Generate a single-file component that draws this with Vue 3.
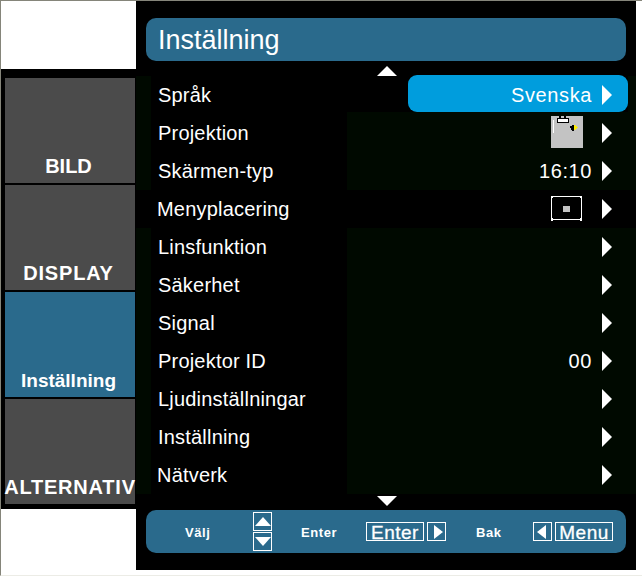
<script setup>
const tabs = [
  { label: 'BILD', cls: 'bild' },
  { label: 'DISPLAY', cls: 'display' },
  { label: 'Inställning', cls: 'active' },
  { label: 'ALTERNATIV', cls: 'alt' },
]
const rows = [
  { label: 'Språk', value: 'Svenska', selected: true, tint: true },
  { label: 'Projektion', icon: 'proj', tint: true },
  { label: 'Skärmen-typ', value: '16:10', tint: true },
  { label: 'Menyplacering', icon: 'menu', tint: false, tight: true },
  { label: 'Linsfunktion', tint: true },
  { label: 'Säkerhet', tint: true },
  { label: 'Signal', tint: true },
  { label: 'Projektor ID', value: '00', tint: true },
  { label: 'Ljudinställningar', tint: true },
  { label: 'Inställning', tint: true },
  { label: 'Nätverk', tint: true, tight: true },
]
</script>

<template>
  <div class="screen">
    <div class="osd">
      <aside class="side">
        <div class="blank top"></div>
        <nav class="tabs">
          <div v-for="t in tabs" :key="t.label" class="tab" :class="t.cls">{{ t.label }}</div>
        </nav>
        <div class="blank bottom"></div>
      </aside>
      <main class="main">
        <header class="title">Inställning</header>
        <div class="arrow-row"><span class="tri up"></span></div>
        <section class="list">
          <div v-for="r in rows" :key="r.label" class="row" :class="{ tinted: r.tint }">
            <div class="label" :class="{ tight: r.tight }">{{ r.label }}</div>
            <div class="cell" :class="{ sel: r.selected }">
              <span v-if="r.value" class="value">{{ r.value }}</span>
              <svg v-if="r.icon === 'proj'" class="ic proj" width="32" height="32" viewBox="0 0 32 32">
                <rect width="32" height="32" fill="#c3c3c3" />
                <rect x="2" y="4" width="1" height="13" fill="#fff" />
                <rect x="6.500" y="2.500" width="11" height="4" fill="#fff" stroke="#000" />
                <rect x="8" y="0" width="2" height="2" fill="#000" />
                <rect x="13" y="0" width="2" height="2" fill="#000" />
                <path d="M19 10h2v-1h2v6h-2v-1h-1v-2h-1z" fill="#000" />
                <path d="M23 9h1l3 2.500-3 2.500h-1z" fill="#ffef00" />
              </svg>
              <svg v-if="r.icon === 'menu'" class="ic place" width="32" height="25" viewBox="0 0 32 25">
                <rect x="0.500" y="0.500" width="30" height="23" fill="none" stroke="#fff" />
                <rect x="0" y="0" width="2" height="2" fill="#fff" /><rect x="29" y="0" width="2" height="2" fill="#fff" />
                <rect x="0" y="22" width="2" height="3" fill="#fff" /><rect x="29" y="22" width="2" height="3" fill="#fff" />
                <rect x="12" y="10" width="7" height="6" fill="#c3c3c3" />
              </svg>
              <span class="chev"></span>
            </div>
          </div>
        </section>
        <div class="arrow-row low"><span class="tri down"></span></div>
        <footer class="foot">
          <span class="hint valj">Välj</span>
          <span class="updown">
            <span class="kbox"><span class="ktri up"></span></span>
            <span class="kbox"><span class="ktri down"></span></span>
          </span>
          <span class="hint enter">Enter</span>
          <span class="key k-enter">Enter</span>
          <span class="kbox k-right"><span class="ktri right"></span></span>
          <span class="hint bak">Bak</span>
          <span class="kbox k-left"><span class="ktri left"></span></span>
          <span class="key k-menu">Menu</span>
        </footer>
      </main>
    </div>
  </div>
</template>

<style>
html, body { margin: 0; background: #fff; }
</style>

<style scoped>
.screen { width: 642px; height: 576px; overflow: hidden; background: #fff; font-family: "Liberation Sans", Arial, sans-serif; color: #fff; box-sizing: border-box; border-top: 1px solid #85857a; border-left: 1px solid #85857a; border-bottom: 1px solid #ecece6; }
.osd { display: flex; width: 635px; height: 569px; background: #000; }
.side { width: 135px; flex: none; display: flex; flex-direction: column; }
.blank { background: #fff; }
.blank.top { height: 68px; }
.blank.bottom { flex: 1; }
.tabs { height: 440px; box-sizing: border-box; padding: 9px 0 5px 4px; display: flex; flex-direction: column; gap: 2px; background: #000; }
.tab { width: 130px; height: 105px; background: #4b4b4b; display: flex; align-items: flex-end; justify-content: center; box-sizing: border-box; padding: 0 3px 5px 0; font-size: 20px; font-weight: 700; line-height: 23px; white-space: nowrap; }
.tab.display { letter-spacing: 0.8px; }
.tab.alt { letter-spacing: 0.8px; padding-right: 0; }
.tab.active { background: #2a6a8c; font-size: 19px; }
.main { flex: 1; min-width: 0; display: flex; flex-direction: column; background: #000; }
.title { margin: 17px 10px 0 10px; height: 43px; background: #2a6a8c; border-radius: 10px; font-size: 27px; line-height: 45px; padding-left: 12px; }
.arrow-row { height: 15px; display: flex; justify-content: center; align-items: flex-end; padding-left: 2px; }
.arrow-row.low { height: 14px; align-items: flex-start; }
.list { height: 420px; flex: none; }
.row { height: 38px; display: flex; }
.label { width: 211px; flex: none; box-sizing: border-box; border-left: 15px solid #000; padding-left: 7px; font-size: 20px; line-height: 38px; letter-spacing: 0.2px; white-space: nowrap; }
.label.tight { padding-left: 6px; }
.tinted .label { border-left-color: #000900; }
.cell { flex: 1; display: flex; justify-content: flex-end; align-items: center; padding-right: 24px; position: relative; }
.tinted .cell { background: #000900; }
.tinted .cell.sel { background: linear-gradient(#000900, #000900) right / 8px 100% no-repeat, linear-gradient(#000900, #000900) bottom / 100% 2px no-repeat, #000; }
.cell.sel::before { content: ""; position: absolute; left: 61px; right: 8px; top: -1px; height: 37px; background: #009ddd; border-radius: 9px; }
.value { position: relative; font-size: 20px; letter-spacing: 0.6px; margin-right: 10px; }
.ic { margin-right: 19px; display: block; }
.ic.proj { margin-bottom: 2px; }
.ic.place { margin-bottom: 1px; }
.chev { position: relative; width: 0; height: 0; border-left: 10px solid #fff; border-top: 10px solid transparent; border-bottom: 10px solid transparent; flex: none; }
.tri { width: 0; height: 0; border-left: 10px solid transparent; border-right: 10px solid transparent; }
.tri.up { border-bottom: 10px solid #fff; }
.tri.down { border-top: 10px solid #fff; }
.foot { margin: 0 10px; height: 43px; background: #2a6a8c; border-radius: 10px; display: flex; align-items: center; font-size: 13px; font-weight: 700; }
.hint { letter-spacing: 0.6px; margin-top: 2px; white-space: nowrap; flex: none; }
.valj { margin-left: 39px; width: 68px; }
.updown { display: flex; flex-direction: column; gap: 1px; flex: none; }
.kbox { width: 19px; height: 19px; box-sizing: border-box; border: 1px solid #fff; display: flex; align-items: center; justify-content: center; flex: none; }
.enter { margin-left: 29px; width: 36px; }
.key { width: 58px; height: 19px; box-sizing: border-box; border: 1px solid #fff; font-size: 19px; font-weight: 400; line-height: 20px; text-align: center; letter-spacing: 0.5px; flex: none; -webkit-text-stroke: 0.3px #fff; }
.k-enter { margin-left: 29px; }
.k-right { margin-left: 3px; }
.bak { margin-left: 30px; width: 25px; }
.k-left { margin-left: 32px; }
.k-menu { margin-left: 3px; }
.ktri { width: 0; height: 0; }
.ktri.up { border-left: 8.500px solid transparent; border-right: 8.500px solid transparent; border-bottom: 9px solid #fff; }
.ktri.down { border-left: 8.500px solid transparent; border-right: 8.500px solid transparent; border-top: 9px solid #fff; }
.ktri.right { border-top: 7px solid transparent; border-bottom: 7px solid transparent; border-left: 9px solid #fff; margin-left: 3px; }
.ktri.left { border-top: 7px solid transparent; border-bottom: 7px solid transparent; border-right: 9px solid #fff; margin-right: 3px; }
</style>
